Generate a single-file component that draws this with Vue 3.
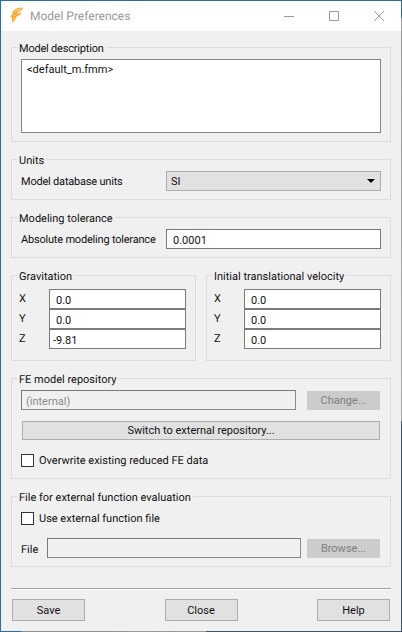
<template>
  <div class="window">
    <div class="title-bar">
      <svg class="app-icon" width="13" height="16" viewBox="0 0 13 16">
        <path d="M3 4 C5 1.5 9 .5 13 .5 C12.5 2.5 10.5 4.5 7.5 5 L7 6.2 C8.5 6.2 10 6 11.5 5.6 C10.8 7.8 8.8 9 6.6 9.4 C6 11.5 4.5 14 2.5 15.5 C1.8 14 1.8 12 2.2 10.2 L.2 10.6 C.6 9 1.6 7.8 2.6 7 C2.6 6 2.7 5 3 4 Z" fill="#f7a829" />
        <path d="M4 4 C6 2.4 8.6 1.6 11.4 1.4 C10 2.8 7.6 3.6 4.6 4.6 Z M3.2 8.6 C5 7.8 7.2 7.4 9.6 6.8 C8.2 8 6 8.4 3.6 9.2 Z M3.2 10.4 L5 10 C4.6 11.6 4 12.8 3.2 13.8 Z" fill="#fdd88a" />
      </svg>
      <span class="title-text">Model Preferences</span>
      <div class="win-controls">
        <svg width="10" height="1" viewBox="0 0 10 1"><path d="M0 .5H10" stroke="#999" /></svg>
        <svg width="10" height="10" viewBox="0 0 10 10"><path d="M.5 .5H9.5V9.5H.5Z" fill="none" stroke="#999" /></svg>
        <svg width="10" height="10" viewBox="0 0 10 10"><path d="M0 0L10 10M10 0L0 10" stroke="#999" /></svg>
      </div>
    </div>

    <div class="body">
      <fieldset class="group desc-group">
        <legend>Model description</legend>
        <textarea class="field desc-area" readonly :value="description"></textarea>
      </fieldset>

      <fieldset class="group row-group">
        <legend>Units</legend>
        <div class="row">
          <label class="row-label">Model database units</label>
          <div class="combo">
            <span>SI</span>
            <span class="arrow"></span>
          </div>
        </div>
      </fieldset>

      <fieldset class="group row-group">
        <legend>Modeling tolerance</legend>
        <div class="row">
          <label class="row-label">Absolute modeling tolerance</label>
          <input class="field grow" readonly value="0.0001" />
        </div>
      </fieldset>

      <div class="vectors">
        <fieldset class="group vector-group" v-for="vec in vectors" :key="vec.title">
          <legend>{{ vec.title }}</legend>
          <div class="vector-row" v-for="c in vec.rows" :key="c.axis">
            <span class="axis">{{ c.axis }}</span>
            <input class="field grow" :class="{ tight: c.tight }" readonly :value="c.value" />
          </div>
        </fieldset>
      </div>

      <fieldset class="group repo-group">
        <legend>FE model repository</legend>
        <div class="repo-top">
          <input class="field grow disabled" readonly value="(internal)" />
          <button class="btn small" disabled>Change...</button>
        </div>
        <button class="btn switch">Switch to external repository...</button>
        <label class="check">
          <span class="box"></span>
          <span class="check-text">Overwrite existing reduced FE data</span>
        </label>
      </fieldset>

      <fieldset class="group file-group">
        <legend>File for external function evaluation</legend>
        <label class="check first">
          <span class="box"></span>
          <span class="check-text">Use external function file</span>
        </label>
        <div class="file-row">
          <span class="file-label">File</span>
          <input class="field grow disabled" readonly value="" />
          <button class="btn small" disabled>Browse...</button>
        </div>
      </fieldset>

      <div class="separator"></div>

      <div class="actions">
        <button class="btn action">Save</button>
        <button class="btn action">Close</button>
        <button class="btn action">Help</button>
      </div>
    </div>
  </div>
</template>

<script setup>
const description = '<default_m.fmm>'

const vectors = [
  {
    title: 'Gravitation',
    rows: [
      { axis: 'X', value: '0.0' },
      { axis: 'Y', value: '0.0' },
      { axis: 'Z', value: '-9.81', tight: true }
    ]
  },
  {
    title: 'Initial translational velocity',
    rows: [
      { axis: 'X', value: '0.0' },
      { axis: 'Y', value: '0.0' },
      { axis: 'Z', value: '0.0' }
    ]
  }
]
</script>

<style>
html,
body {
  margin: 0;
  background: #f0f0f0;
}
</style>

<style scoped>
.window {
  box-sizing: border-box;
  width: 402px;
  height: 632px;
  overflow: hidden;
  border-top: 1px solid #2a6ca3;
  border-left: 1px solid #2a6ca3;
  padding: 0 1px 1px 0;
  /* the last column and row show what is behind the window */
  background:
    linear-gradient(#2a6ca3 17px, #9a9a9a 17px, #a8a8a8 420px, #3b566b 420px) right top / 1px 100% no-repeat,
    linear-gradient(90deg, #2a6ca3 20px, #8f8f8f 20px, #9a9a9a 205px, #3b566b 205px) left bottom / 100% 1px no-repeat,
    #f0f0f0;
  color: #111;
  font-family: Roboto, sans-serif;
  font-size: 11px;
  text-rendering: geometricPrecision;
}

.title-bar {
  display: flex;
  align-items: center;
  height: 30px;
  padding-left: 9px;
  background: #fff;
}

.app-icon {
  flex-shrink: 0;
  margin-bottom: 2px;
}

.title-text {
  margin-left: 7px;
  font-family: Roboto, sans-serif;
  font-size: 12px;
  color: #999;
}

.win-controls {
  display: flex;
  align-items: center;
  gap: 35px;
  margin-left: auto;
  padding-right: 17px;
}

.win-controls svg {
  display: block;
}

.body {
  display: flex;
  flex-direction: column;
  gap: 10px;
  height: 600px;
  box-sizing: border-box;
  padding: 9px 10px 0;
  background: #f0f0f0;
}

.group {
  box-sizing: border-box;
  min-width: 0;
  margin: 0;
  border: 1px solid #dcdcdc;
  padding: 0 9px;
}

legend {
  height: 14px;
  margin-left: -4px;
  padding: 0 2px;
  line-height: 18px;
}

.desc-group {
  height: 102px;
  padding-top: 5px;
}

.desc-group legend {
  letter-spacing: -0.2px;
}

.field {
  box-sizing: border-box;
  display: block;
  height: 20px;
  margin: 0;
  min-width: 0;
  border: 1px solid #7a7a7a;
  border-radius: 0;
  outline: none;
  padding: 2px 6px 0;
  background: #fff;
  color: #111;
  font: inherit;
}

.grow {
  flex: 1;
}

.desc-area {
  width: 100%;
  height: 74px;
  padding: 3px 5px;
  border-color: #82878f;
  resize: none;
}

.row-group {
  height: 48px;
  padding-top: 5px;
}

.row {
  display: flex;
  align-items: center;
}

.row-label {
  width: 145px;
  flex-shrink: 0;
  white-space: nowrap;
  letter-spacing: -0.2px;
}

.combo {
  box-sizing: border-box;
  display: flex;
  flex: 1;
  align-items: center;
  justify-content: space-between;
  height: 20px;
  border: 1px solid #adadad;
  padding: 0 4px;
  background: #e1e1e1;
}

.arrow {
  width: 0;
  height: 0;
  margin-right: 1px;
  border-top: 4px solid #000;
  border-left: 4px solid transparent;
  border-right: 4px solid transparent;
}

.vectors {
  display: grid;
  grid-template-columns: 185px 185px;
  gap: 10px;
}

.vector-group {
  display: flex;
  flex-direction: column;
  gap: 0;
  height: 93px;
  padding: 7px 9px 0 7px;
}

.vector-group legend {
  margin-left: -2px;
}

.vector-row {
  display: flex;
  align-items: center;
  height: 20px;
}

.axis {
  width: 30px;
  flex-shrink: 0;
  padding-bottom: 1px;
}

.field.tight {
  padding-left: 3px;
}

.repo-group {
  height: 108px;
  padding-top: 5px;
}

.repo-top {
  display: flex;
  align-items: center;
  gap: 11px;
  padding-right: 1px;
}

.field.disabled {
  border-color: #7a7a7a #8a8a8a #8a8a8a #7a7a7a;
  padding-left: 4px;
  background: #f0f0f0;
  color: #8a8a8a;
}

.btn {
  box-sizing: border-box;
  height: 19px;
  margin: 0;
  border: 1px solid #adadad;
  border-radius: 0;
  padding: 0;
  background: #e1e1e1;
  color: #111;
  font: inherit;
}

.btn:disabled {
  border-color: #cccccc;
  background: #cccccc;
  color: #7f7f7f;
}

.small {
  width: 73px;
  flex-shrink: 0;
}

.switch {
  display: block;
  width: 358px;
  margin: 11px 0 0 1px;
}

.check {
  display: flex;
  align-items: center;
  gap: 5px;
  margin-top: 13px;
}

.check.first {
  margin-top: 8px;
}

.check-text {
  padding-top: 1px;
}

.box {
  box-sizing: border-box;
  display: block;
  width: 13px;
  height: 13px;
  border: 1px solid #333;
  background: #fff;
}

.file-group {
  height: 78px;
  padding-top: 0;
}

.file-row {
  display: flex;
  align-items: center;
  margin-top: 13px;
  padding-right: 1px;
}

.file-label {
  width: 26px;
  flex-shrink: 0;
  padding-top: 2px;
}

.file-row .btn {
  margin-left: 6px;
}

.separator {
  height: 1px;
  margin-top: 11px;
  background: #a0a0a0;
  box-shadow: 0 1px 0 #fff;
}

.actions {
  display: flex;
  justify-content: space-between;
  margin: 0 1px;
}

.action {
  width: 73px;
  height: 22px;
}
</style>
